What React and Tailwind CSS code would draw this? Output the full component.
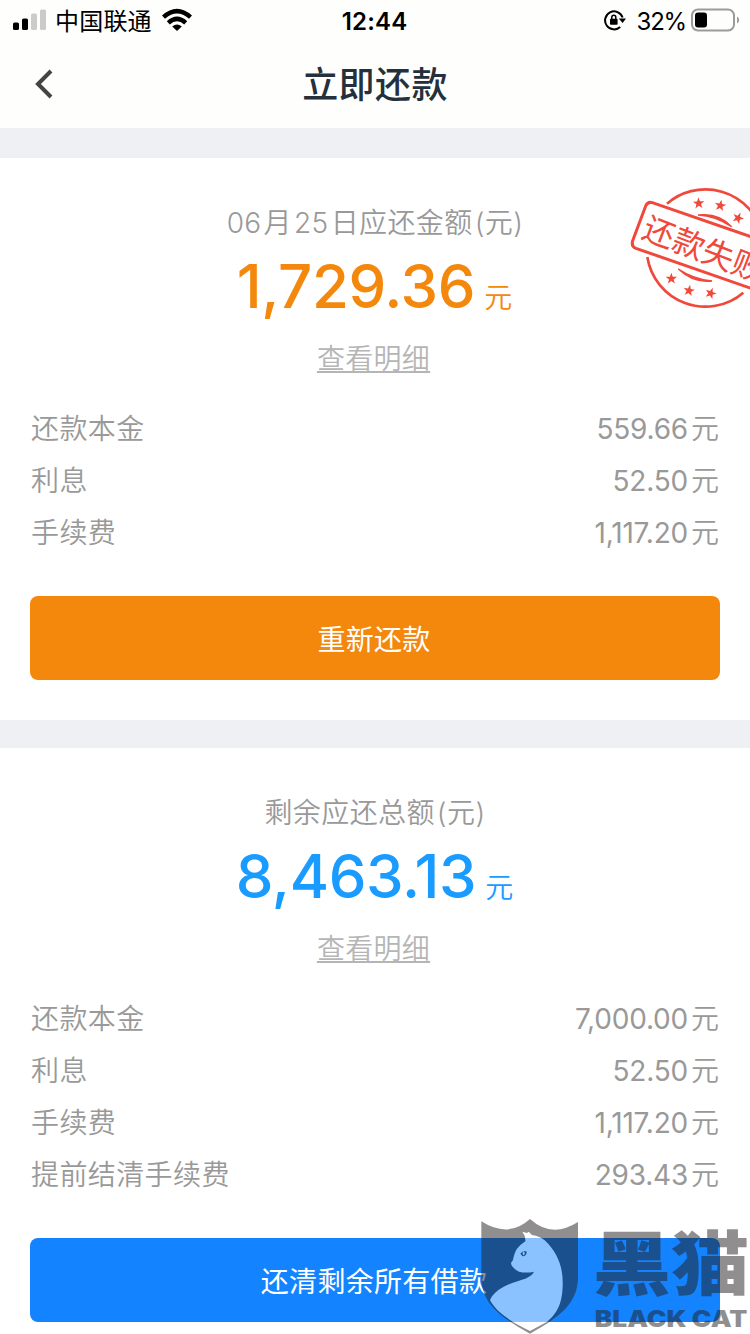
import React from 'react';

const dueBill = {
  title: ['06', '月', '25', '日应还金额', '(元)'],
  amount: '1,729.36',
  rows: [
    { label: '还款本金', value: '559.66' },
    { label: '利息', value: '52.50' },
    { label: '手续费', value: '1,117.20' },
  ],
  action: '重新还款',
};

const remainingBill = {
  title: ['剩余应还总额', '(元)'],
  amount: '8,463.13',
  rows: [
    { label: '还款本金', value: '7,000.00' },
    { label: '利息', value: '52.50' },
    { label: '手续费', value: '1,117.20' },
    { label: '提前结清手续费', value: '293.43' },
  ],
  action: '还清剩余所有借款',
};

const STAR = 'M0-18 4.2-5.8 17.1-5.6 6.9 2.2 10.6 14.6 0 7.2-10.6 14.6-6.9 2.2-17.1-5.6-4.2-5.8Z';

function StatusBar() {
  return (
    <div className="flex h-10 items-center justify-between pl-[13px] pr-[10px] text-black">
      <div className="flex w-[260px] items-center">
        <svg width="34" height="22" viewBox="0 0 34 22">
          <rect x="0" y="13.5" width="6" height="7.5" rx="1.6" />
          <rect x="9" y="9.5" width="6" height="11.5" rx="1.6" />
          <rect x="18" y="4.5" width="6" height="16.5" rx="1.6" fill="#cbcbca" />
          <rect x="27" y="0.5" width="6" height="20.5" rx="1.6" fill="#cbcbca" />
        </svg>
        <span className="ml-2 pt-[3px] text-[24px] leading-[37px] tracking-[0.2px]">中国联通</span>
        <svg className="ml-[9px]" width="32" height="24" viewBox="0 0 32 24">
          <g fill="none" stroke="#000" strokeWidth="4.4">
            <path d="M2.5 9.2Q16-3 29.5 9.2" />
            <path d="M7.3 14.8Q16 7 24.7 14.8" />
          </g>
          <path d="M11.2 18.6Q16 14.4 20.8 18.6L16 23Z" />
        </svg>
      </div>
      <span className="pr-1 pt-[3px] text-[24px] font-semibold leading-[37px] tracking-[0.2px]">12:44</span>
      <div className="flex w-[260px] items-center justify-end">
        <svg width="22" height="22" viewBox="0 0 22 22">
          <path d="M16.2 18A9 9 0 1 1 18.6 8.5" fill="none" stroke="#000" strokeWidth="2" />
          <path d="M14.8 9.6H22L18.6 14Z" />
          <rect x="6" y="9.8" width="7.6" height="6" rx="0.8" />
          <path d="M7.8 10V8.2a2 2 0 0 1 4 0V10" fill="none" stroke="#000" strokeWidth="1.5" />
        </svg>
        <span className="ml-[11px] pt-[3px] text-[24px] leading-[37px] tracking-[-1.2px]">32%</span>
        <svg className="ml-[5px]" width="49" height="24" viewBox="0 0 49 24">
          <rect x="1" y="1.5" width="42" height="21" rx="6" fill="none" stroke="#9b9b9a" strokeWidth="2" />
          <rect x="4" y="4.5" width="12" height="15" rx="3" />
          <path d="M46 8.5Q48.2 9.5 48.2 12T46 15.5Z" fill="#9b9b9a" />
        </svg>
      </div>
    </div>
  );
}

function FailedStamp() {
  const stars = [
    [266, 100, -3],
    [331, 107, 10],
    [384, 144, 25],
    [184, 326, 0],
    [237, 362, 10],
    [302, 370, 20],
  ];
  return (
    <svg className="absolute right-0 top-3" width="140" height="150" viewBox="0 0 420 450">
      <g fill="none" stroke="#f0483b" strokeWidth="8">
        <path d="M171 101A176 176 0 0 1 455 184" />
        <path d="M112 261A176 176 0 0 0 400 368" />
        <path d="M264 135Q325 127 365 170Q315 137 264 135Z" strokeWidth="4" fill="#f0483b" />
        <path d="M205 297Q250 340 306 333Q250 327 205 297Z" strokeWidth="4" fill="#f0483b" />
        <path d="M440 206L127 98Q113 94 107 108L68 212Q63 229 78 235L440 361" strokeWidth="9" />
      </g>
      {stars.map(([x, y, angle]) => (
        <path key={x} d={STAR} fill="#f0483b" transform={`translate(${x} ${y}) rotate(${angle})`} />
      ))}
      <text transform="translate(91 202) rotate(21)" fontSize="95" fontWeight="400" fill="#f0483b">
        还款失败
      </text>
    </svg>
  );
}

function BillCard({ bill, amountClass, buttonClass, children }) {
  return (
    <section className="relative bg-white px-[30px] pb-10 pt-[45px]">
      {children}
      <div className="flex flex-col items-center">
        <h2 className="flex gap-[2px] text-[28px] font-[350] leading-10 tracking-[0.4px] text-[#999]">
          {bill.title.map((part) => (
            <span key={part}>{part}</span>
          ))}
        </h2>
        <div className={`-mt-[3px] flex h-[92px] items-baseline pr-[1px] leading-[92px] ${amountClass}`}>
          <span className="text-[60px] font-[450] tracking-[-0.4px]">{bill.amount}</span>
          <span className="ml-[9px] text-[28px] font-[350]">元</span>
        </div>
        <a className="mr-[3px] mt-[7px] text-[28px] font-[350] leading-10 tracking-[0.3px] text-[#b5b5b5] underline decoration-2 underline-offset-2">
          查看明细
        </a>
      </div>

      <div className="mt-6">
        {bill.rows.map((row) => (
          <div
            key={row.label}
            className="flex h-[52px] items-center justify-between pl-[1px] pr-[1px] text-[28px] font-[350] text-[#999]"
          >
            <span className="tracking-[0.4px]">{row.label}</span>
            <span className="flex gap-[3px]">
              <span className="font-normal tracking-[-0.2px]">{row.value}</span>
              <span>元</span>
            </span>
          </div>
        ))}
      </div>

      <button
        className={`mt-[37px] h-[84px] w-full rounded-lg pr-[2px] pt-[3px] text-[28px] tracking-[0.3px] text-white ${buttonClass}`}
      >
        {bill.action}
      </button>
    </section>
  );
}

function Watermark() {
  return (
    <svg className="absolute bottom-0 right-0" width="290" height="134" viewBox="0 0 870 402">
      <g opacity="0.5">
        <path
          fill="#231f20"
          d="M64 64Q145 116 210 57Q275 116 354 66V230C354 310 300 350 210 401C120 350 64 310 64 230Z"
        />
        <path
          fill="#fff"
          d="M187 95L201 99L206 95L216 105Q240 109 254 121C295 160 310 205 308 258C306 315 290 340 262 365Q235 379 210 393C165 370 115 345 90 301C100 276 125 262 151 251C185 238 213 235 222 215Q198 220 177 215Q152 202 153 188Q157 184 159 180Q163 158 171 146Q181 134 196 124Q197 107 187 95Z"
        />
        <path fill="#231f20" d="M181 161Q190 149 200 155Q200 168 188 169Z" />
        <ellipse cx="191" cy="160" rx="3" ry="6" fill="#fff" />
        <g fill="#231f20">
          <text x="398" y="270" fontSize="212" fontWeight="900" textLength="470" lengthAdjust="spacingAndGlyphs">
            黑猫
          </text>
          <text x="404" y="380" fontSize="68" fontWeight="900" textLength="458" lengthAdjust="spacingAndGlyphs">
            BLACK CAT
          </text>
        </g>
      </g>
    </svg>
  );
}

export default function App() {
  return (
    <div className="relative h-[1334px] w-[750px] overflow-hidden bg-[#eff0f3] font-['Inter','Noto_Sans_CJK_SC',sans-serif]">
      <header className="h-32 bg-[#fefefc]">
        <StatusBar />
        <div className="flex h-[88px] items-center px-[34px]">
          <svg className="w-10" width="40" height="30" viewBox="0 0 40 30">
            <path d="M17 2L4 15L17 28" fill="none" stroke="#444" strokeWidth="4" />
          </svg>
          <h1 className="flex-1 pt-[2px] text-center text-[36px] font-medium tracking-[0.4px] text-[#25303d]">
            立即还款
          </h1>
          <span className="w-10" />
        </div>
      </header>

      <main className="flex flex-col gap-7 pt-[30px]">
        <BillCard bill={dueBill} amountClass="text-[#f3880d]" buttonClass="bg-[#f3880d]">
          <FailedStamp />
        </BillCard>
        <BillCard bill={remainingBill} amountClass="text-[#1a9bff]" buttonClass="bg-[#1483ff]" />
      </main>

      <Watermark />
    </div>
  );
}
